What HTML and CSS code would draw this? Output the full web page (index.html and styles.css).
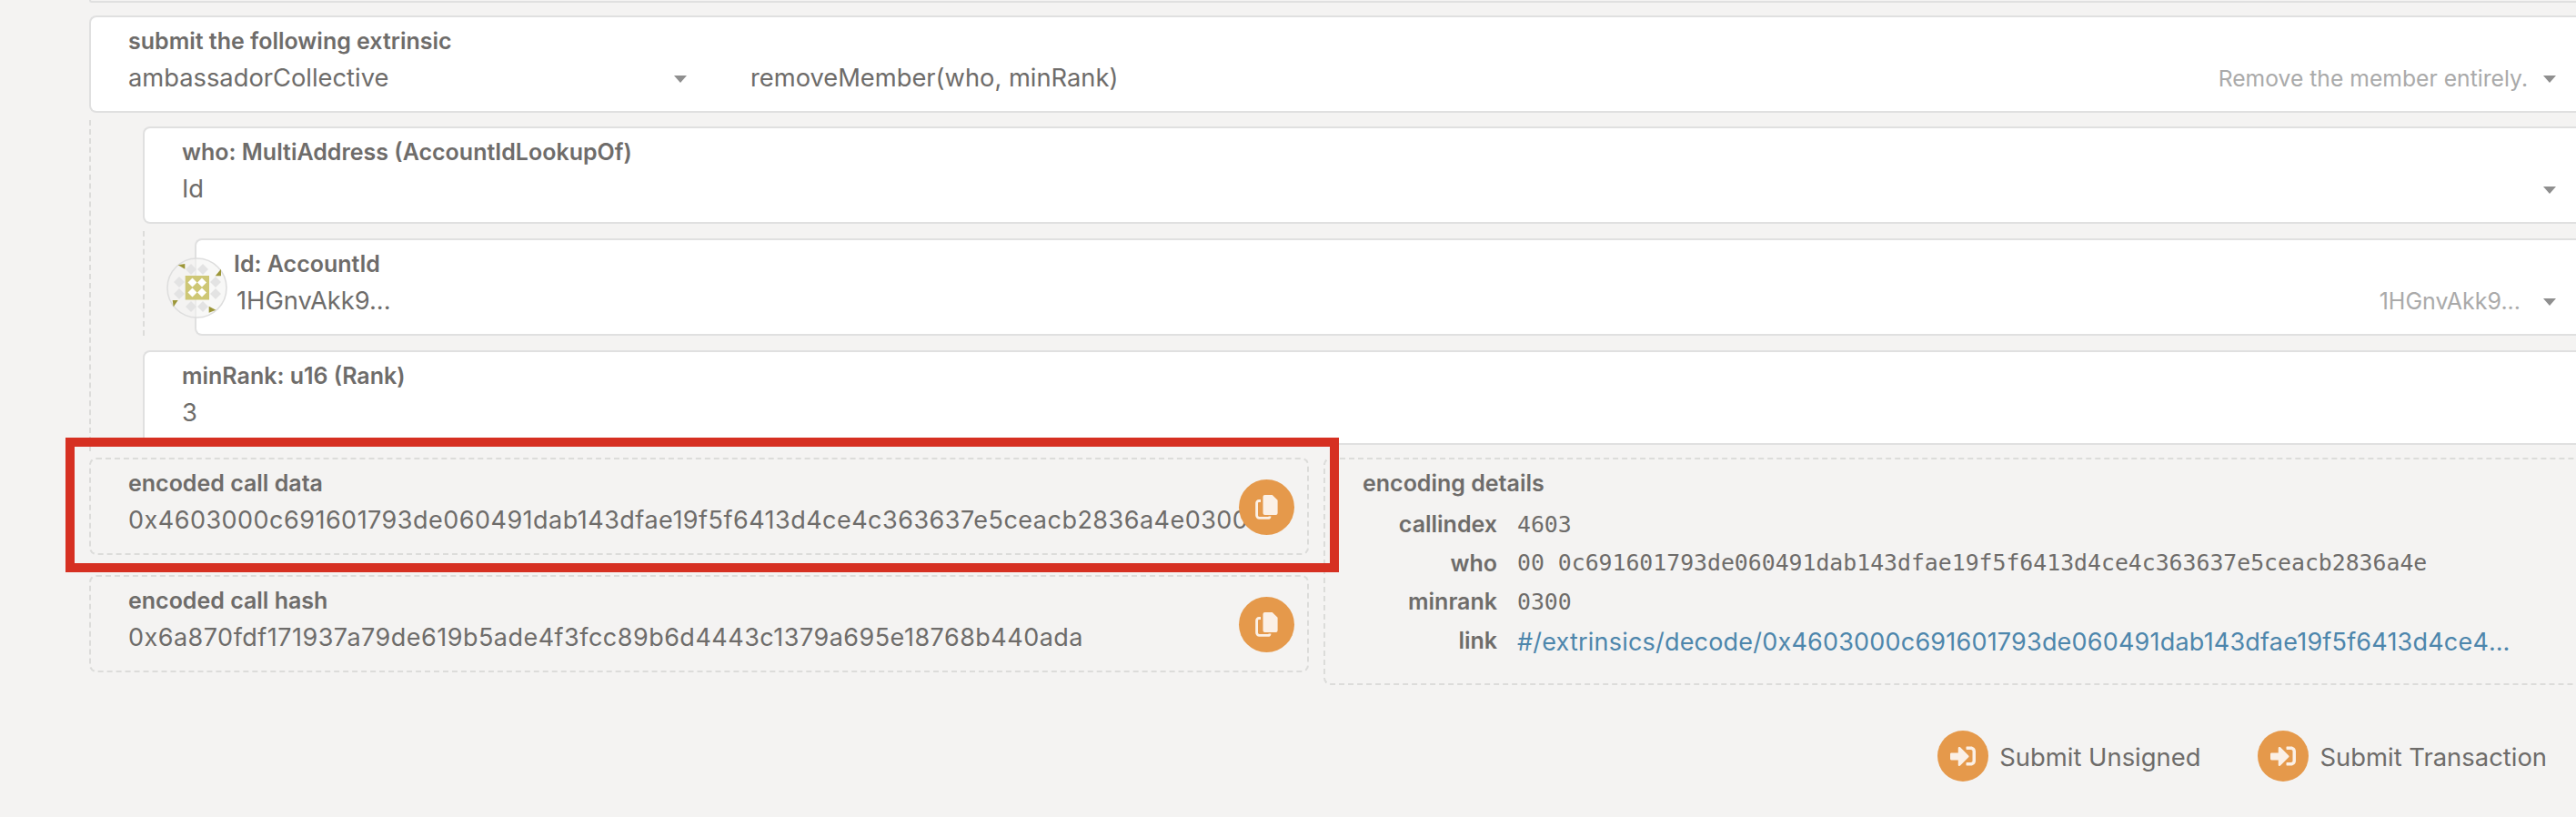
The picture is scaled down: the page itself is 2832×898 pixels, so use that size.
FILE: index.html
```html
<!DOCTYPE html>
<html lang="en">
<head>
<meta charset="utf-8">
<title>Extrinsic</title>
<link rel="stylesheet" href="styles.css">
</head>
<body>
<div class="page">
  <div class="stub"></div>

  <div class="box">
    <div class="split">
      <div class="section section-pallet">
        <div class="label">submit the following extrinsic</div>
        <div class="value">ambassadorCollective</div>
        <span class="arrow arrow-section"></span>
      </div>
      <div class="section-method value">removeMember(who, minRank)</div>
      <div class="hint">Remove the member entirely.</div>
      <span class="arrow"></span>
    </div>
  </div>

  <div class="params">
    <div class="box">
      <div class="split">
        <div class="section">
          <div class="label">who: MultiAddress (AccountIdLookupOf)</div>
          <div class="value">Id</div>
        </div>
        <span class="arrow"></span>
      </div>
    </div>

    <div class="params nested">
      <div class="box">
        <svg class="avatar" viewBox="0 0 67 67">
          <circle cx="33.5" cy="33.5" r="32.5" fill="#f4f3f2" fill-opacity="0.6" stroke="#dedede" stroke-width="1.6"/>
          <g fill="#e3e3e3">
            <path d="M27 7l6 6-6 6-6-6z"/><path d="M40 7l6 6-6 6-6-6z"/>
            <path d="M14 21l6 6-6 6-6-6z"/><path d="M54 21l6 6-6 6-6-6z"/>
            <path d="M14 34l6 6-6 6-6-6z"/><path d="M54 34l6 6-6 6-6-6z"/>
            <path d="M27 48l6 6-6 6-6-6z"/><path d="M40 48l6 6-6 6-6-6z"/>
          </g>
          <rect x="20.7" y="20" width="26.3" height="26.5" fill="#cec775"/>
          <g fill="#fff">
            <path d="M28.5 22.500l5 5-5 5-5-5z"/><path d="M39 22.500l5 5-5 5-5-5z"/>
            <path d="M28.5 33.500l5 5-5 5-5-5z"/><path d="M39 33.500l5 5-5 5-5-5z"/>
          </g>
          <g fill="#9c9638">
            <path d="M12.7 8.3L20.3 7v5.7z"/><path d="M53.7 20.3L60 12.7v7.6z"/>
            <path d="M6.7 47h6L7.7 54.3z"/><path d="M46.7 53.7l7.6 4-7.6 3z"/>
          </g>
        </svg>
        <div class="split">
          <div class="section">
            <div class="label">Id: AccountId</div>
            <div class="value value-account">1HGnvAkk9...</div>
          </div>
          <div class="hint hint-short">1HGnvAkk9...</div>
          <span class="arrow"></span>
        </div>
      </div>
    </div>

    <div class="box box-short">
      <div class="label">minRank: u16 (Rank)</div>
      <div class="value">3</div>
    </div>
  </div>

  <div class="encoded">
    <div class="encoded-left">
      <div class="dashed">
        <div class="highlight"></div>
        <div class="label">encoded call data</div>
        <div class="value hex">0x4603000c691601793de060491dab143dfae19f5f6413d4ce4c363637e5ceacb2836a4e0300</div>
        <span class="copy">
          <svg class="copy-icon" viewBox="0 0 25 27"><path d="M10.5 0h8.2L24.6 5.8V20a2 2 0 0 1-2 2H10.5a2 2 0 0 1-2-2V2a2 2 0 0 1 2-2z" fill="#fbf0e6"/><path d="M6 6.500H4a2.400 2.400 0 0 0-2.400 2.400v13.700A2.800 2.800 0 0 0 4.400 25.400H14a2 2 0 0 0 2-2" fill="none" stroke="#fbf0e6" stroke-width="2.8"/></svg>
        </span>
      </div>
      <div class="dashed">
        <div class="label">encoded call hash</div>
        <div class="value hex">0x6a870fdf171937a79de619b5ade4f3fcc89b6d4443c1379a695e18768b440ada</div>
        <span class="copy">
          <svg class="copy-icon" viewBox="0 0 25 27"><path d="M10.5 0h8.2L24.6 5.8V20a2 2 0 0 1-2 2H10.5a2 2 0 0 1-2-2V2a2 2 0 0 1 2-2z" fill="#fbf0e6"/><path d="M6 6.500H4a2.400 2.400 0 0 0-2.400 2.400v13.700A2.800 2.800 0 0 0 4.400 25.400H14a2 2 0 0 0 2-2" fill="none" stroke="#fbf0e6" stroke-width="2.8"/></svg>
        </span>
      </div>
    </div>
    <div class="dashed details">
      <div class="label">encoding details</div>
      <div class="details-grid">
        <div class="key">callindex</div><div class="mono">4603</div>
        <div class="key">who</div><div class="mono">00 0c691601793de060491dab143dfae19f5f6413d4ce4c363637e5ceacb2836a4e</div>
        <div class="key">minrank</div><div class="mono">0300</div>
        <div class="key">link</div><a class="link" href="#">#/extrinsics/decode/0x4603000c691601793de060491dab143dfae19f5f6413d4ce4c363637e5ceacb2836a4e0300</a>
      </div>
    </div>
  </div>

  <div class="actions">
    <div class="action">
      <span class="action-circle"><svg class="action-icon" viewBox="0 0 512 512"><path d="M416 448h-84c-6.600 0-12-5.400-12-12v-40c0-6.600 5.400-12 12-12h84c17.700 0 32-14.300 32-32V160c0-17.700-14.300-32-32-32h-84c-6.600 0-12-5.400-12-12V76c0-6.600 5.400-12 12-12h84c53 0 96 43 96 96v192c0 53-43 96-96 96zm-47-201L201 79c-15-15-41-4.500-41 17v96H24c-13.300 0-24 10.700-24 24v96c0 13.300 10.700 24 24 24h136v96c0 21.500 26 32 41 17l168-168c9.300-9.400 9.300-24.600 0-34z"/></svg></span>
      <span class="action-text">Submit Unsigned</span>
    </div>
    <div class="action">
      <span class="action-circle"><svg class="action-icon" viewBox="0 0 512 512"><path d="M416 448h-84c-6.600 0-12-5.400-12-12v-40c0-6.600 5.400-12 12-12h84c17.700 0 32-14.300 32-32V160c0-17.700-14.300-32-32-32h-84c-6.600 0-12-5.400-12-12V76c0-6.600 5.400-12 12-12h84c53 0 96 43 96 96v192c0 53-43 96-96 96zm-47-201L201 79c-15-15-41-4.500-41 17v96H24c-13.300 0-24 10.700-24 24v96c0 13.300 10.700 24 24 24h136v96c0 21.500 26 32 41 17l168-168c9.300-9.400 9.300-24.600 0-34z"/></svg></span>
      <span class="action-text">Submit Transaction</span>
    </div>
  </div>
</div>
</body>
</html>
```
FILE: styles.css
```css
* { box-sizing: border-box; }
html, body { margin: 0; height: 100%; }
body {
  background: #f4f3f2;
  color: #6e6c6a;
  font-family: Inter, "Liberation Sans", sans-serif;
  overflow: hidden;
}
.page {
  width: 2852px;
  height: 898px;
  padding-left: 98px;
}
.stub {
  height: 3px;
  margin-bottom: 14px;
  border: 2px solid #e0e0e0;
  border-top: 0;
  border-right: 0;
  border-radius: 0 0 0 8px;
}
.box {
  position: relative;
  height: 107px;
  padding: 13px 42px 0 41px;
  background: #fff;
  border: 2px solid #e0e0e0;
  border-right: 0;
  border-radius: 8px 0 0 8px;
}
.box-short { height: 104px; margin-top: 16px; }
.label {
  height: 26px;
  font-size: 25px;
  line-height: 26px;
  font-weight: 600;
  color: #6e6c6a;
  white-space: nowrap;
}
.value {
  margin-top: 12px;
  font-size: 27.300px;
  line-height: 32px;
  white-space: nowrap;
}
.value-account {
  margin-left: 3px;
}
.hex {
  font-size: 27px;
  letter-spacing: 0.480px;
}
.split {
  display: flex;
  align-items: flex-end;
  height: 70px;
}
.section {
  position: relative;
  flex: 1;
}
.section-pallet {
  flex: 0 0 684px;
}
.section-method {
  margin-top: 0;
  flex: 1;
}
.hint {
  font-size: 24.700px;
  line-height: 32px;
  color: #aaaaaa;
  white-space: nowrap;
}
.hint-short {
  margin-right: 8px;
  font-size: 25px;
}
.arrow {
  flex: none;
  width: 0;
  height: 0;
  margin-left: 17px;
  margin-bottom: 11px;
  border-left: 7px solid transparent;
  border-right: 7px solid transparent;
  border-top: 8px solid #8f8f8f;
}
.arrow-section {
  position: absolute;
  right: 70px;
  bottom: 11px;
  margin: 0;
}
.params {
  margin-top: 8px;
  padding: 7px 0 7px 57px;
  border-left: 2px dashed #dcdcda;
}
.nested {
  padding: 8px 0 0 55px;
}
.avatar {
  position: absolute;
  left: -33px;
  top: 19px;
  width: 67px;
  height: 67px;
}
.encoded {
  display: grid;
  grid-template-columns: 1341px 1fr;
  column-gap: 16px;
  margin-top: 7px;
}
.encoded-left {
  display: flex;
  flex-direction: column;
  gap: 22px;
}
.dashed {
  position: relative;
  height: 107px;
  padding: 13px 0 0 41px;
  border: 2px dashed #dcdcda;
  border-radius: 8px;
}
.details {
  height: 250px;
  border-right: 0;
  border-radius: 8px 0 0 8px;
}
.highlight {
  position: absolute;
  top: -24px;
  left: -28px;
  right: -35px;
  bottom: -21px;
  border: 10px solid #d63022;
  z-index: 2;
  pointer-events: none;
}
.copy {
  position: absolute;
  top: 22px;
  right: 14px;
  display: flex;
  align-items: center;
  justify-content: center;
  width: 61px;
  height: 61px;
  border-radius: 50%;
  background: #e5994b;
}
.copy-icon {
  width: 25px;
  height: 27px;
}
.details-grid {
  display: grid;
  grid-template-columns: 148px 1fr;
  grid-auto-rows: 42.500px;
  column-gap: 22px;
  align-items: center;
  margin-top: 11px;
}
.key {
  text-align: right;
  font-size: 25px;
  font-weight: 600;
}
.mono {
  font-family: "DejaVu Sans Mono", "Liberation Mono", monospace;
  font-size: 24.800px;
  white-space: nowrap;
}
.link {
  display: block;
  max-width: 1100px;
  padding-top: 3px;
  overflow: hidden;
  text-overflow: ellipsis;
  white-space: nowrap;
  font-size: 27px;
  letter-spacing: 0.200px;
  color: #4d86ac;
  text-decoration: none;
}
.actions {
  display: flex;
  justify-content: flex-end;
  gap: 63px;
  margin-top: 50px;
  padding-right: 52px;
}
.action {
  display: flex;
  align-items: center;
  gap: 12px;
}
.action-circle {
  display: flex;
  align-items: center;
  justify-content: center;
  width: 56px;
  height: 56px;
  border-radius: 50%;
  background: #e5994b;
}
.action-icon {
  width: 28px;
  height: 28px;
  fill: #fbf0e6;
}
.action-text {
  padding-top: 2px;
  font-size: 27.400px;
  line-height: 32px;
}
```
